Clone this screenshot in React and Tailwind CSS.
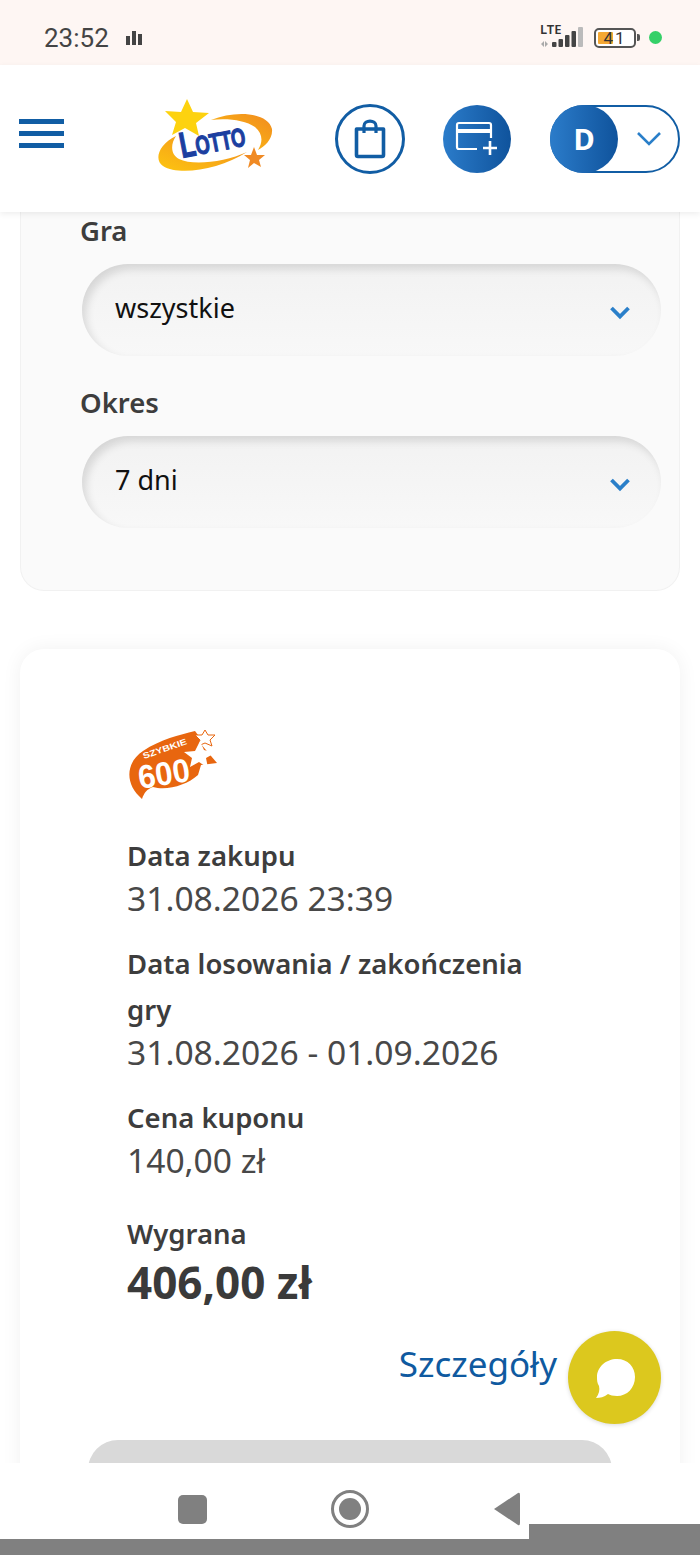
const font = { fontFamily: '"Noto Sans", "Liberation Sans", sans-serif' };

function Chevron() {
  return (
    <svg width="22" height="15" viewBox="0 0 22 15" className="absolute right-[30px] top-[41px]">
      <path d="M2.5 3 L11 11.5 L19.5 3" fill="none" stroke="#2a7fc9" strokeWidth="3.8" />
    </svg>
  );
}

function Select({ value }) {
  return (
    <div className="relative h-[92px] ml-[2px] mr-[-2px] rounded-[46px] bg-gradient-to-b from-[#f2f2f2] to-[#f8f8f8] shadow-[inset_4px_5px_8px_rgba(0,0,0,0.12)] pl-[33px] pt-[24px]">
      <div className="text-[27px] leading-[40px] text-[#111]">{value}</div>
      <Chevron />
    </div>
  );
}

function LottoLogo() {
  return (
    <svg width="122" height="80" viewBox="0 0 122 80">
      <defs>
        <linearGradient id="sw" x1="0" y1="1" x2="1" y2="0">
          <stop offset="0" stopColor="#fdc510" />
          <stop offset="1" stopColor="#f18a1f" />
        </linearGradient>
      </defs>
      <path d="M56 22 C80 12 113 14 117 31 C118 41 110 48 103 52 C108 44 108 36 100 29 C90 22 72 20 56 22 Z" fill="url(#sw)" />
      <path d="M21 38 C3 47 -1 62 8 68 C24 78 64 72 92 54 C70 64 38 68 24 61 C16 57 15 47 21 38 Z" fill="url(#sw)" />
      <path d="M32 1 L38 14 L54 15 L41 25 L44 38 L30 30 L17 37 L21 24 L10 13 L26 14 Z" fill="#fdd20f" />
      <path d="M99 49 L102 57 L110 57 L104 62 L106 69 L99 65 L93 70 L95 62 L89 57 L96 57 Z" fill="#f08a24" />
      <text x="27" y="60" fontFamily='"Liberation Sans", sans-serif' fontWeight="700" fontSize="26" fill="#1c3fa0" stroke="#1c3fa0" strokeWidth="1.2" textLength="66" lengthAdjust="spacingAndGlyphs" transform="rotate(-11 27 60)"><tspan fontSize="36">L</tspan>OTTO</text>
    </svg>
  );
}

function GameLogo() {
  return (
    <svg width="94" height="72" viewBox="0 0 94 72">
      <path d="M15 70 C-3 55 -1 33 16 22 C34 10 52 6 68 2 L74 10 L73 14 L90 34 L74 36 L71 46 C60 56 40 62 26 58 C20 60 17 64 15 70 Z" fill="#e8660f" />
      <path d="M78 1 L81 6 L88 6 L83 11 L85 17 L78 14 L71 17 L73 11 L68 6 L75 6 Z" fill="#fff" stroke="#e8660f" strokeWidth="1" />
      <path d="M73 12 L77 21 L88 24 L79 29 L81 39 L72 33 L63 38 L65 29 L57 23 L68 22 Z" fill="#fff" />
      <text x="13" y="60" fontFamily='"Liberation Sans", sans-serif' fontWeight="700" fontSize="33" fill="#fff" textLength="52" lengthAdjust="spacingAndGlyphs" transform="rotate(-9 13 60)">600</text>
      <text x="17" y="30" fontFamily='"Liberation Sans", sans-serif' fontWeight="700" fontSize="8.5" fill="#fff" textLength="46" lengthAdjust="spacingAndGlyphs" transform="rotate(-19 17 30)">SZYBKIE</text>
    </svg>
  );
}

function Field({ label, value, className }) {
  return (
    <div className={className}>
      <div className="text-[27.5px] leading-[46px] font-semibold text-[#3d3d3d]">{label}</div>
      <div className="text-[33.6px] leading-[38px] text-[#484848]">{value}</div>
    </div>
  );
}

export default function App() {
  return (
    <div style={font} className="relative h-[1555px] w-[700px] overflow-hidden bg-white flex flex-col">
      {/* status bar */}
      <div className="h-[65px] shrink-0 bg-[#fef6f3] flex items-center justify-between pl-[44px] pr-[38px] pt-[10px]">
        <div className="flex items-center gap-[17px]">
          <span className="text-[26px] leading-[30px] text-[#444]" style={{ fontFamily: 'Roboto, sans-serif' }}>23:52</span>
          <svg width="16" height="16" viewBox="0 0 16 16">
            <rect x="0" y="6" width="4" height="9" fill="#444" />
            <rect x="6" y="1" width="4" height="14" fill="#444" />
            <rect x="12" y="4" width="4" height="11" fill="#444" />
          </svg>
        </div>
        <div className="flex items-center">
          <div className="relative w-[45px] h-[28px] mt-[7px]">
            <span className="absolute left-0 top-[-7px] text-[13px] leading-[18px] font-semibold text-[#333]">LTE</span>
            <svg width="45" height="28" viewBox="0 0 45 28" className="absolute left-0 top-0">
              <path d="M1 17 L4 14 V20 Z M8 17 L5 14 V20 Z" fill="#aaa" />
              <rect x="12" y="15" width="4.5" height="5" rx="1" fill="#444" />
              <rect x="18.5" y="12" width="4.5" height="8" rx="1" fill="#444" />
              <rect x="25" y="8" width="4.5" height="12" rx="1" fill="#444" />
              <rect x="31.5" y="4" width="4.5" height="16" rx="1" fill="#444" />
              <rect x="38" y="0" width="5" height="20" rx="1" fill="#bbb" />
            </svg>
          </div>
          <div className="relative ml-[9px] w-[42px] h-[20px] rounded-[5px] border-2 border-[#555] overflow-hidden bg-white">
            <div className="absolute left-[2px] top-[2px] bottom-[2px] w-[15px] bg-[#f5a833] rounded-[1px]" />
            <span className="absolute inset-0 text-center text-[17px] leading-[16px] tracking-[2px] text-[#333]" style={{ fontFamily: 'Roboto, sans-serif' }}>41</span>
          </div>
          <div className="ml-[1px] w-[3px] h-[7px] bg-[#555] rounded-r-[2px]" />
          <div className="ml-[9px] w-[13px] h-[13px] rounded-full bg-[#35d068]" />
        </div>
      </div>

      {/* header */}
      <div className="relative z-10 h-[147px] shrink-0 bg-white shadow-[0_2px_6px_rgba(0,0,0,0.07)] flex items-center">
        <div className="ml-[19px] w-[45px] flex flex-col gap-[7px] mt-[-10px]">
          <div className="h-[5px] bg-[#115da4]" />
          <div className="h-[5px] bg-[#115da4]" />
          <div className="h-[5px] bg-[#115da4]" />
        </div>
        <div className="ml-[91px] mt-[-1px]"><LottoLogo /></div>
        <div className="ml-[58px] w-[70px] h-[70px] rounded-full border-[3px] border-[#115da4] flex items-center justify-center">
          <svg width="32" height="40" viewBox="0 0 32 40">
            <path d="M2.5 10 H29.5 V36 Q29.5 37.5 28 37.5 H4 Q2.5 37.5 2.5 36 Z" fill="none" stroke="#115da4" strokeWidth="3.6" strokeLinejoin="round" />
            <path d="M10 14 V7 C10 0.5 22 0.5 22 7 V14" fill="none" stroke="#115da4" strokeWidth="3.2" />
          </svg>
        </div>
        <div className="ml-[38px] w-[68px] h-[68px] rounded-full bg-gradient-to-r from-[#2b7cca] to-[#0f539c] flex items-center justify-center">
          <svg width="44" height="36" viewBox="0 0 44 36">
            <path d="M22 28 H4 Q2 28 2 26 V4 Q2 2 4 2 H34 Q36 2 36 4 V17" fill="none" stroke="#fff" strokeWidth="2.2" />
            <path d="M2 8 H36 V12 H2 Z" fill="#fff" />
            <path d="M35 20 V34 M28 27 H42" stroke="#fff" strokeWidth="2.6" fill="none" />
          </svg>
        </div>
        <div className="relative ml-[39px] w-[130px] h-[68px] rounded-full border-2 border-[#115da4] bg-white">
          <div className="absolute left-[-2px] top-[-2px] w-[68px] h-[68px] rounded-full bg-gradient-to-r from-[#2b7cca] to-[#0f539c] flex items-center justify-center text-white font-bold text-[29px]">D</div>
          <svg width="26" height="16" viewBox="0 0 26 16" className="absolute right-[16px] top-[24px]">
            <path d="M2 2 L13 13 L24 2" fill="none" stroke="#2a7fc9" strokeWidth="2.6" />
          </svg>
        </div>
      </div>

      {/* page */}
      <div className="flex-1 min-h-0 overflow-hidden px-[20px]">
        <div className="h-[380px] rounded-b-[24px] bg-[#fafafa] border-b border-x border-[#f1f1f1] pl-[59px] pr-[20px]">
          <div className="text-[27.5px] leading-[40px] font-semibold text-[#3d3d3d] mt-[-1px]">Gra</div>
          <div className="mt-[13px]"><Select value="wszystkie" /></div>
          <div className="text-[27.5px] leading-[40px] font-semibold text-[#3d3d3d] mt-[27px]">Okres</div>
          <div className="mt-[13px]"><Select value="7 dni" /></div>
        </div>

        <div className="mt-[58px] h-[900px] rounded-[24px] bg-white shadow-[0_0_20px_rgba(0,0,0,0.06)] pt-[80px] pl-[107px] pr-[68px]">
          <div className="ml-[0px]"><GameLogo /></div>
          <Field className="mt-[32px]" label="Data zakupu" value="31.08.2026 23:39" />
          <div className="mt-[24px] w-[410px] text-[27.5px] leading-[46px] font-semibold text-[#3d3d3d]">Data losowania / zakończenia gry</div>
          <div className="text-[33.6px] leading-[38px] text-[#484848]">31.08.2026 - 01.09.2026</div>
          <Field className="mt-[24px]" label="Cena kuponu" value="140,00 zł" />
          <div className="mt-[35px] text-[27.5px] leading-[40px] font-semibold text-[#3d3d3d]">Wygrana</div>
          <div className="mt-[1px] text-[44px] leading-[54px] font-bold text-[#3a3a3a]">406,00 zł</div>
          <div className="mt-[31px] mr-[55px] text-right text-[35px] leading-[48px] text-[#0f5aa0]">Szczegóły</div>
          <div className="mt-[52px] ml-[-39px] mr-[0px] h-[80px] rounded-[30px] bg-[#d9d9d9]" />
        </div>
      </div>

      {/* bottom nav */}
      <div className="relative z-10 h-[92px] shrink-0 bg-white flex items-start">
        <div className="absolute left-[178px] top-[32px] w-[29px] h-[29px] rounded-[5px] bg-[#808080]" />
        <div className="absolute left-[331px] top-[27px] w-[38px] h-[38px] rounded-full border-[3px] border-[#808080] flex items-center justify-center">
          <div className="w-[22px] h-[22px] rounded-full bg-[#808080]" />
        </div>
        <svg width="28" height="34" viewBox="0 0 28 34" className="absolute left-[493px] top-[29px]">
          <path d="M1 17 L25 1 Q27 0 27 3 V31 Q27 34 25 33 Z" fill="#808080" />
        </svg>
        <div className="absolute left-0 right-0 bottom-0 h-[16px] bg-[#808080]" />
        <div className="absolute left-[529px] right-0 bottom-0 h-[31px] bg-[#808080]" />
      </div>

      {/* chat button */}
      <div className="absolute z-20 left-[568px] top-[1331px] w-[93px] h-[93px] rounded-full bg-[#dcc81e] shadow-[0_1px_4px_rgba(0,0,0,0.15)] flex items-center justify-center">
        <svg width="44" height="44" viewBox="0 0 44 44">
          <path d="M24 3 C35 3 42 11 42 21 C42 32 34 40 24 40 C20 40 17 39 15 38 C11 41 7 42 3 42 C6 38 7 34 6 30 C4 27 4 24 4 21 C4 11 13 3 24 3 Z" fill="#fff" />
        </svg>
      </div>
    </div>
  );
}
